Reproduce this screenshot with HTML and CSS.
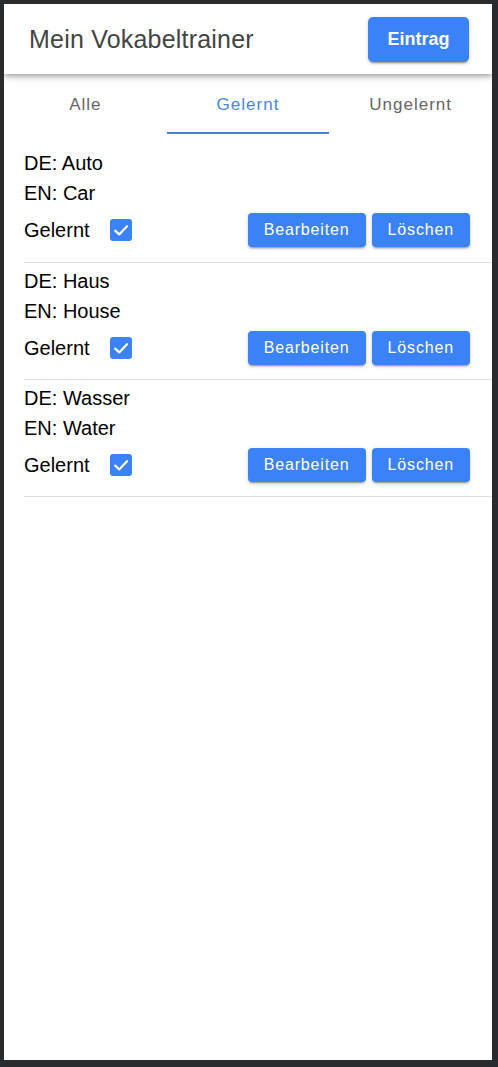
FILE: index.html
```html
<!DOCTYPE html>
<html lang="de">
<head>
<meta charset="utf-8">
<title>Mein Vokabeltrainer</title>
<link rel="stylesheet" href="styles.css">
</head>
<body>
<div class="app">
  <header class="header">
    <h1 class="title">Mein Vokabeltrainer</h1>
    <button class="btn btn-add">Eintrag</button>
  </header>
  <nav class="tabs">
    <div class="tab">Alle</div>
    <div class="tab active">Gelernt</div>
    <div class="tab">Ungelernt</div>
  </nav>
  <ul class="list">
    <li class="item">
      <div class="line">DE: Auto</div>
      <div class="line">EN: Car</div>
      <div class="row">
        <span class="label">Gelernt</span>
        <span class="check"><svg viewBox="0 0 22 22" width="22" height="22"><path d="M5.2 11.6 L9.2 15.4 L17 7.2" fill="none" stroke="#fff" stroke-width="2.2" stroke-linecap="round" stroke-linejoin="round"/></svg></span>
        <div class="actions">
          <button class="btn btn-sm">Bearbeiten</button>
          <button class="btn btn-sm">Löschen</button>
        </div>
      </div>
    </li>
    <li class="item">
      <div class="line">DE: Haus</div>
      <div class="line">EN: House</div>
      <div class="row">
        <span class="label">Gelernt</span>
        <span class="check"><svg viewBox="0 0 22 22" width="22" height="22"><path d="M5.2 11.6 L9.2 15.4 L17 7.2" fill="none" stroke="#fff" stroke-width="2.2" stroke-linecap="round" stroke-linejoin="round"/></svg></span>
        <div class="actions">
          <button class="btn btn-sm">Bearbeiten</button>
          <button class="btn btn-sm">Löschen</button>
        </div>
      </div>
    </li>
    <li class="item">
      <div class="line">DE: Wasser</div>
      <div class="line">EN: Water</div>
      <div class="row">
        <span class="label">Gelernt</span>
        <span class="check"><svg viewBox="0 0 22 22" width="22" height="22"><path d="M5.2 11.6 L9.2 15.4 L17 7.2" fill="none" stroke="#fff" stroke-width="2.2" stroke-linecap="round" stroke-linejoin="round"/></svg></span>
        <div class="actions">
          <button class="btn btn-sm">Bearbeiten</button>
          <button class="btn btn-sm">Löschen</button>
        </div>
      </div>
    </li>
  </ul>
</div>
</body>
</html>
```
FILE: styles.css
```css
* { box-sizing: border-box; }
html, body { margin: 0; height: 100%; }
body {
  background: #2a2b2d;
  padding: 4px 6px 7px 4px;
  font-family: "Liberation Sans", Arial, sans-serif;
}
.app {
  background: #fff;
  height: 100%;
  overflow: hidden;
}
.header {
  position: relative;
  z-index: 2;
  height: 70px;
  display: flex;
  align-items: center;
  justify-content: space-between;
  padding: 0 23px 0 25px;
  background: #fff;
  box-shadow: 0 2px 4px -1px rgba(0,0,0,.2), 0 4px 5px 0 rgba(0,0,0,.14), 0 1px 10px 0 rgba(0,0,0,.12);
}
.title {
  margin: 0;
  font-size: 25px;
  font-weight: 400;
  letter-spacing: 0.2px;
  color: #444;
}
.btn {
  border: 0;
  background: #3b82f6;
  color: #fff;
  font-family: "Liberation Sans", Arial, sans-serif;
  border-radius: 4px;
  cursor: pointer;
  box-shadow: 0 3px 1px -2px rgba(0,0,0,.2), 0 2px 2px 0 rgba(0,0,0,.14), 0 1px 5px 0 rgba(0,0,0,.12);
}
.btn-add {
  height: 45px;
  width: 101px;
  font-size: 18px;
  font-weight: 700;
  border-radius: 5px;
}
.tabs {
  display: grid;
  grid-template-columns: 1fr 1fr 1fr;
  height: 60px;
}
.tab {
  display: flex;
  align-items: center;
  justify-content: center;
  font-size: 17px;
  letter-spacing: 1px;
  color: #666;
  border-bottom: 2px solid transparent;
  padding-top: 4px;
}
.tab.active {
  color: #4a86df;
  border-bottom-color: #4a80d8;
}
.list {
  list-style: none;
  margin: 0;
  padding: 11px 0 0 20px;
}
.item {
  padding: 3px 22px 11px 0;
  border-bottom: 1px solid #e0e0e0;
}
.item:first-child {
  padding-bottom: 12px;
}
.line {
  font-size: 20px;
  line-height: 30px;
  color: #000;
}
.row {
  display: flex;
  align-items: center;
  height: 40px;
  margin-top: 2px;
}
.label {
  font-size: 20px;
  color: #000;
  width: 86px;
}
.check {
  width: 22px;
  height: 22px;
  border-radius: 3px;
  background: #3b82f6;
  display: flex;
}
.actions {
  margin-left: auto;
  display: flex;
  gap: 6px;
}
.btn-sm {
  height: 34px;
  padding: 0 16px;
  font-size: 16px;
  letter-spacing: 0.85px;
}
```
